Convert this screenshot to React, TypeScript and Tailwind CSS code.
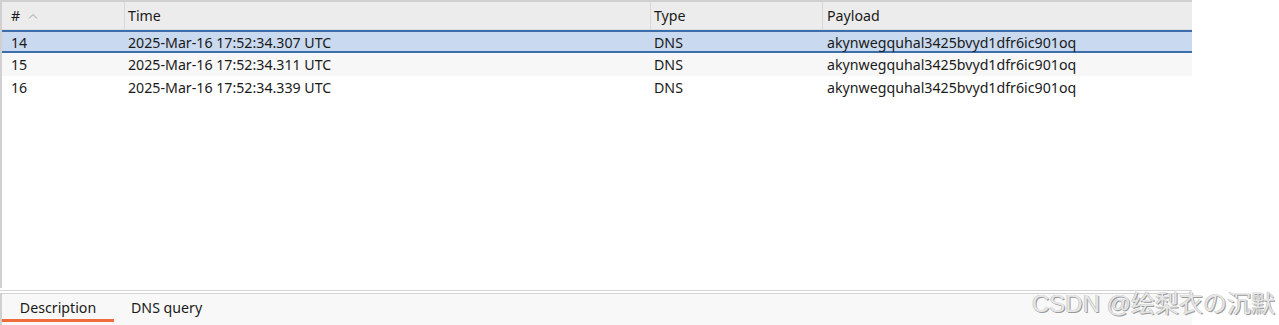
const rows = [
  { id: '14', time: '2025-Mar-16 17:52:34.307 UTC', type: 'DNS', payload: 'akynwegquhal3425bvyd1dfr6ic901oq' },
  { id: '15', time: '2025-Mar-16 17:52:34.311 UTC', type: 'DNS', payload: 'akynwegquhal3425bvyd1dfr6ic901oq' },
  { id: '16', time: '2025-Mar-16 17:52:34.339 UTC', type: 'DNS', payload: 'akynwegquhal3425bvyd1dfr6ic901oq' },
];

const cols = 'grid grid-cols-[122px_526px_172px_1fr]';

export default function App() {
  return (
    <div
      className="w-[1279px] h-[325px] bg-white relative overflow-hidden text-[14.2px] text-[#1a1a1a]"
      style={{ fontFamily: '"Noto Sans", "Open Sans", sans-serif' }}
    >
      <div className="w-[1192px] h-[288px] border-l-2 border-t-2 border-[#d0d0d0] flex flex-col">
        <div className={`${cols} h-[28px] bg-[#ececec] border-b border-[#dcdcdc]`}>
          <div className="flex items-center gap-2 pl-[9px]">
            <span>#</span>
            <svg width="10" height="6" viewBox="0 0 10 6" className="text-[#a0a0a0]">
              <path d="M1 5.5 L5 1.5 L9 5.5" fill="none" stroke="currentColor" strokeWidth="1" />
            </svg>
          </div>
          <div className="flex items-center pl-[3px] border-l border-[#d8d8d8]">Time</div>
          <div className="flex items-center pl-[3px] border-l border-[#d8d8d8]">Type</div>
          <div className="flex items-center pl-[4px] border-l border-[#d8d8d8]">Payload</div>
        </div>
        <div className="flex-1">
          {rows.map((r, i) => (
            <div
              key={r.id}
              className={`${cols} h-[23px] items-center ${
                i === 0
                  ? 'bg-[#c9d9ef] border-y-2 border-[#3c6eab]'
                  : i === 1
                  ? 'bg-[#f7f7f7]'
                  : 'bg-white'
              }`}
            >
              <div className="pl-[9px]">{r.id}</div>
              <div className="pl-[4px]">{r.time}</div>
              <div className="pl-[4px]">{r.type}</div>
              <div className="pl-[5px]">{r.payload}</div>
            </div>
          ))}
        </div>
      </div>
      <div className="w-[1192px] border-t border-[#d4d4d4] mt-[2px] border-b h-[4px]" />
      <div className="w-[1192px] h-[31px] bg-[#f8f8f8] border-l-2 border-[#d0d0d0] flex">
        <div className="w-[112px] h-full flex items-center justify-center relative pb-[3px]">
          <span>Description</span>
          <div className="absolute bottom-[3px] left-0 right-0 h-[3px] bg-[#f06a3b]" />
        </div>
        <div className="h-full flex items-center pl-[17px] pb-[3px]">DNS query</div>
      </div>
      <div
        className="absolute right-[4px] bottom-[3px] text-[24px] text-[#e6e6e6]"
        style={{
          fontFamily: '"Liberation Sans", "Noto Sans CJK SC", sans-serif',
          textShadow: '1px 1px 0 #9a9a9a, -0.5px -0.5px 0 #b5b5b5',
        }}
      >
        CSDN @绘梨衣の沉默
      </div>
    </div>
  );
}
